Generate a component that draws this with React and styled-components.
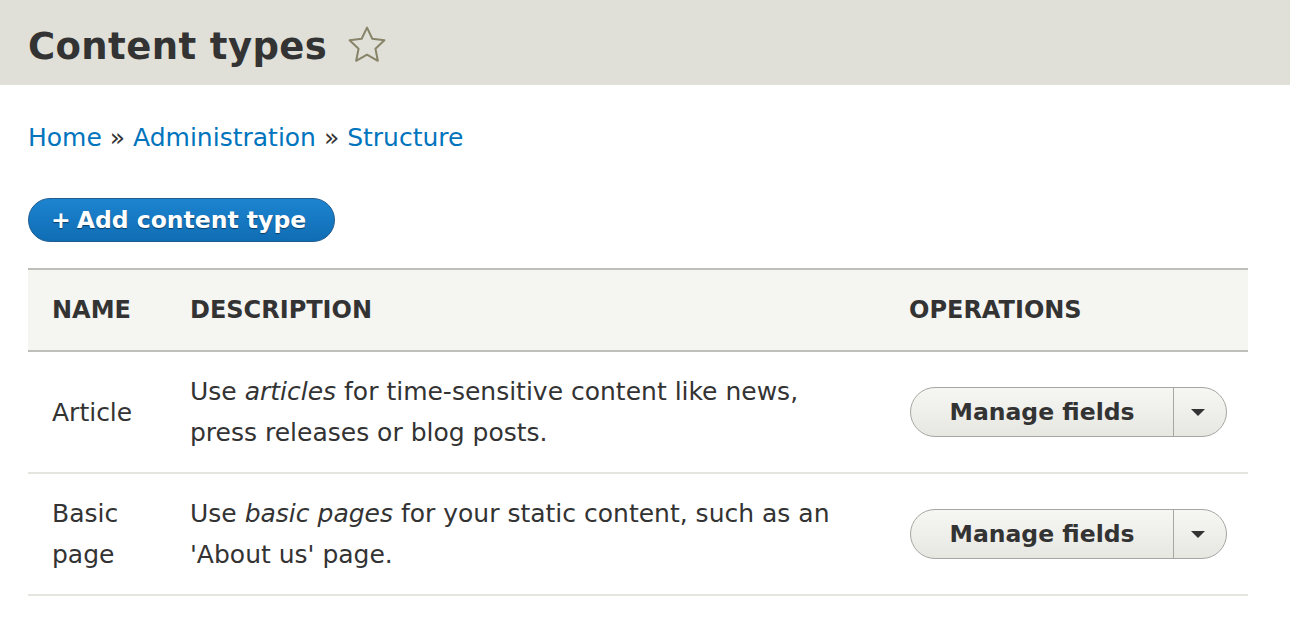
import React from 'react';
import styled, { createGlobalStyle } from 'styled-components';

const Global = createGlobalStyle`
  html, body {
    margin: 0;
    padding: 0;
    background: #fff;
    font-family: "DejaVu Sans", "Liberation Sans", sans-serif;
    color: #333;
  }
`;

const Header = styled.header`
  height: 85px;
  background: #e0e0d8;
  display: flex;
  align-items: center;
  padding: 8px 28px 0;
  box-sizing: border-box;
`;

const Title = styled.h1`
  margin: 0;
  font-size: 37px;
  font-weight: bold;
  color: #333;
  letter-spacing: 0.4px;
`;

const Star = styled.svg`
  width: 44px;
  height: 44px;
  margin-left: 18px;
  margin-top: -4px;
`;

const Main = styled.main`
  padding: 0 42px 0 28px;
`;

const Breadcrumb = styled.nav`
  margin-top: 37px;
  font-size: 25px;
  line-height: 32px;
  color: #333;

  a {
    color: #0074bd;
    text-decoration: none;
  }
`;

const AddButton = styled.button`
  margin-top: 44px;
  height: 44px;
  padding: 0 28px 0 22px;
  border-radius: 22px;
  border: 1px solid #1e5c90;
  background: linear-gradient(to bottom, #1d84d0, #0f6db4);
  color: #fff;
  font-family: inherit;
  font-weight: bold;
  font-size: 23.5px;
  text-shadow: 0 1px 1px #0a3c66;
  display: flex;
  align-items: center;
  gap: 6px;
`;

const Table = styled.table`
  margin-top: 26px;
  width: 100%;
  table-layout: fixed;
  border-collapse: collapse;
  font-size: 25px;
`;

const HeadRow = styled.tr`
  background: #f5f5f2;
  border-top: 2px solid #bfbfba;
  border-bottom: 2px solid #bfbfba;
`;

const Th = styled.th`
  height: 82px;
  padding: 0 24px;
  font-size: 24px;
  text-align: left;
  font-weight: bold;
  text-transform: uppercase;
  width: ${(p) => p.w || 'auto'};
  box-sizing: border-box;
`;

const Row = styled.tr`
  border-bottom: 2px solid #e6e4df;
`;

const Td = styled.td`
  height: 122px;
  padding: 0 ${(p) => p.pr || '24px'} 0 24px;
  line-height: 41px;
  vertical-align: middle;
  box-sizing: border-box;
`;

const Dropbutton = styled.div`
  display: flex;
  width: 317px;
  height: 50px;
  margin-left: 1px;
  border: 1px solid #a6a6a3;
  border-radius: 25px;
  background: linear-gradient(to bottom, #f6f6f3, #e7e7e2);
  box-sizing: border-box;
  overflow: hidden;
`;

const DropMain = styled.span`
  flex: 1;
  display: flex;
  align-items: center;
  justify-content: center;
  font-weight: bold;
  font-size: 23.5px;
  color: #333;
  border-right: 1px solid #a6a6a3;
`;

const DropToggle = styled.span`
  width: 52px;
  display: flex;
  align-items: center;
  justify-content: center;

  &::after {
    content: '';
    border-left: 7px solid transparent;
    border-right: 7px solid transparent;
    border-top: 7px solid #333;
    margin-left: -4px;
  }
`;

const types = [
  {
    name: 'Article',
    desc: (
      <>
        Use <em>articles</em> for time-sensitive content like news, press releases or blog posts.
      </>
    ),
  },
  {
    name: 'Basic page',
    desc: (
      <>
        Use <em>basic pages</em> for your static content, such as an 'About us' page.
      </>
    ),
  },
];

export default function App() {
  return (
    <>
      <Global />
      <Header>
        <Title>Content types</Title>
        <Star viewBox="0 0 24 24">
          <path
            d="M12 2.5l2.9 6.1 6.6.8-4.9 4.6 1.3 6.6L12 17.3l-5.9 3.3 1.3-6.6-4.9-4.6 6.6-.8z"
            fill="none"
            stroke="#878469"
            strokeWidth="1.1"
            strokeLinejoin="round"
          />
        </Star>
      </Header>
      <Main>
        <Breadcrumb>
          <a href="#">Home</a> » <a href="#">Administration</a> » <a href="#">Structure</a>
        </Breadcrumb>
        <AddButton>
          <span>+</span>
          <span>Add content type</span>
        </AddButton>
        <Table>
          <thead>
            <HeadRow>
              <Th w="138px">Name</Th>
              <Th>Description</Th>
              <Th w="363px">Operations</Th>
            </HeadRow>
          </thead>
          <tbody>
            {types.map((t) => (
              <Row key={t.name}>
                <Td>{t.name}</Td>
                <Td pr="40px">{t.desc}</Td>
                <Td>
                  <Dropbutton>
                    <DropMain>Manage fields</DropMain>
                    <DropToggle />
                  </Dropbutton>
                </Td>
              </Row>
            ))}
          </tbody>
        </Table>
      </Main>
    </>
  );
}
